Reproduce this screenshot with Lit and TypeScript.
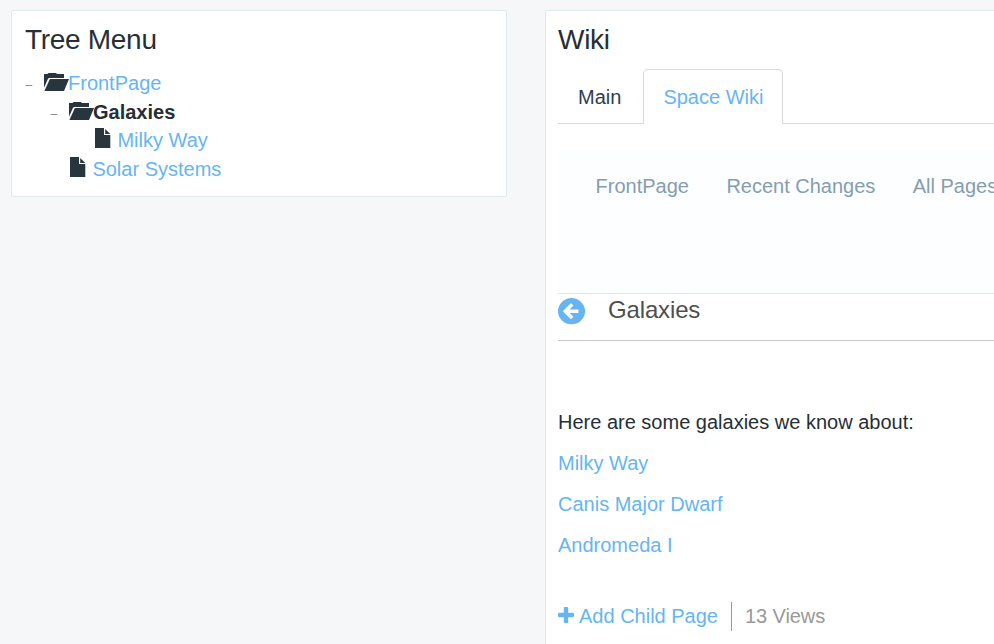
import { LitElement, html, css, svg, nothing } from "lit";
import { customElement } from "lit/decorators.js";

const folder = html`<svg class="folder" viewBox="0 0 25 18">
  ${svg`<path d="M0 14.8V1H3.5L4.5 0H12L13 1H20V4.9H5L3.9 5.9Z"/><path d="M5.9 6.1H25L20 18H.4Z"/>`}
</svg>`;
const file = html`<svg class="file" viewBox="0 0 16 20">
  ${svg`<path d="M0 0H9V7H15.3V20H0Z"/><path d="M10.2 1V6H15.3Z"/>`}
</svg>`;
const back = html`<svg class="back" viewBox="0 0 27 27">
  ${svg`<ellipse cx="13.5" cy="13.2" rx="13.5" ry="13.1"/><path class="arrow" d="M14.2 6.300L7.300 13.200L14.200 20.100M7.800 13.200H20.500"/>`}
</svg>`;
const plus = html`<svg class="plus" viewBox="0 0 1408 1408">
  ${svg`<path d="M1408 608v192q0 40-28 68t-68 28H896v416q0 40-28 68t-68 28H608q-40 0-68-28t-28-68V896H96q-40 0-68-28T0 800V608q0-40 28-68t68-28h416V96q0-40 28-68t68-28h192q40 0 68 28t28 68v416h416q40 0 68 28t28 68z"/>`}
</svg>`;

type Node = { name: string; depth: number; leaf?: boolean; current?: boolean };
const nodes: Node[] = [
  { name: "FrontPage", depth: 0 },
  { name: "Galaxies", depth: 1, current: true },
  { name: "Milky Way", depth: 2, leaf: true },
  { name: "Solar Systems", depth: 1, leaf: true },
];

@customElement("app-root")
export class AppRoot extends LitElement {
  static styles = css`
    :host {
      display: flex;
      align-items: flex-start;
      gap: 38px;
      box-sizing: border-box;
      height: 644px;
      padding: 10px 0 0 11px;
      overflow: hidden;
      background: #f5f7f9;
      color: #272f36;
      font: 20px/28.57px "Liberation Sans", Arial, sans-serif;
    }
    svg { display: block; flex: none; fill: currentColor; }
    .panel {
      box-sizing: border-box;
      flex: none;
      background: #fff;
      border: 1px solid #deedec;
      border-radius: 2px;
    }
    .tree { width: 496px; height: 187px; padding: 0 13px; }
    .wiki { width: 520px; height: 660px; padding: 0 0 0 12px; }
    h2 { margin: 0; padding-top: 13px; height: 45px; font-size: 28px; line-height: 31px; font-weight: 400; letter-spacing: -0.3px; }
    .link { color: #66b5f2; }
    .row { display: flex; height: 28.57px; padding-left: calc(var(--depth) * 25px); }
    .toggle { width: 19px; font-size: 12px; line-height: 32px; color: #888; text-indent: 0.5px; }
    .folder { width: 25px; height: 18px; margin: 4px -1px 0 0; }
    .file { width: 16px; height: 20px; margin: 2px 6.4px 0 1px; }
    .folder, .file { color: #28353d; }
    .current { font-weight: 700; }
    .tabs { display: flex; height: 55px; white-space: nowrap; }
    .tab { box-sizing: border-box; padding: 14px 20px 0; border-bottom: 1px solid #d9d9d9; }
    .tab.main { width: 85px; color: #2f3e4e; }
    .tab.active { width: 140px; padding: 13px 19.4px 0; border: 1px solid #d9d9d9; border-bottom: 0; border-radius: 5px 5px 0 0; }
    .tab.rest { flex: 1; }
    .nav {
      box-sizing: border-box;
      display: flex;
      gap: 37.4px;
      height: 145px;
      margin-top: 25px;
      padding: 23px 0 0 37.6px;
      background: #fcfeff;
      border-bottom: 1px solid #e1e5ea;
      color: #869db0;
      white-space: nowrap;
    }
    .title { box-sizing: border-box; display: flex; height: 47px; padding-top: 4px; border-bottom: 1px solid #c7c8c9; color: #4f4f4f; }
    .title span { margin-top: -2px; font-size: 24px; letter-spacing: -0.15px; }
    .back { width: 27px; height: 27px; margin-right: 23px; color: #66b5f2; }
    .arrow { fill: none; stroke: #fff; stroke-width: 3.5; }
    .content { padding-top: 67px; }
    p { margin: 0 0 12.43px; }
    .footer { display: flex; height: 29px; margin-top: 42px; }
    .plus { width: 16px; height: 16px; margin: 5px 5px 0 0; color: #66b5f2; }
    .views { margin-left: 13px; padding-left: 13px; border-left: 1px solid #999; color: #999; letter-spacing: -0.08px; }
  `;

  render() {
    return html`
      <section class="panel tree">
        <h2>Tree Menu</h2>
        ${nodes.map((n) => html`
          <div class="row" style="--depth:${n.depth}">
            <span class="toggle">${n.leaf ? nothing : "–"}</span>
            ${n.leaf ? file : folder}
            <span class=${n.current ? "current" : "link"}>${n.name}</span>
          </div>`)}
      </section>
      <section class="panel wiki">
        <h2>Wiki</h2>
        <div class="tabs">
          <div class="tab main">Main</div>
          <div class="tab active link">Space Wiki</div>
          <div class="tab rest"></div>
        </div>
        <nav class="nav"><span>FrontPage</span><span>Recent Changes</span><span>All Pages</span></nav>
        <div class="title">${back}<span>Galaxies</span></div>
        <div class="content">
          <p>Here are some galaxies we know about:</p>
          <p class="link">Milky Way</p>
          <p class="link">Canis Major Dwarf</p>
          <p class="link">Andromeda I</p>
        </div>
        <div class="footer">${plus}<span class="link">Add Child Page</span><span class="views">13 Views</span></div>
      </section>
    `;
  }
}
